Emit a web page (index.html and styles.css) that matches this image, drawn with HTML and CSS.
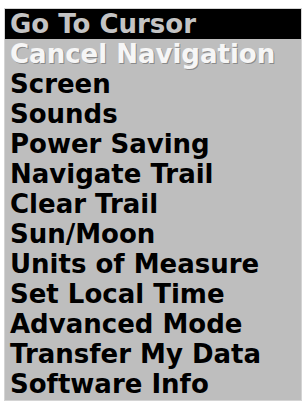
FILE: index.html
```html
<!DOCTYPE html>
<html lang="en">
<head>
    <meta charset="UTF-8">
    <meta name="viewport" content="width=device-width, initial-scale=1.0">
    <title>Settings Menu</title>
    <link rel="stylesheet" href="styles.css">
</head>
<body>
    <div class="menu">
        <div class="menu-item selected">Go To Cursor</div>
        <div class="menu-item disabled">Cancel Navigation</div>
        <div class="menu-item">Screen</div>
        <div class="menu-item">Sounds</div>
        <div class="menu-item">Power Saving</div>
        <div class="menu-item">Navigate Trail</div>
        <div class="menu-item">Clear Trail</div>
        <div class="menu-item">Sun/Moon</div>
        <div class="menu-item">Units of Measure</div>
        <div class="menu-item">Set Local Time</div>
        <div class="menu-item">Advanced Mode</div>
        <div class="menu-item">Transfer My Data</div>
        <div class="menu-item">Software Info</div>
    </div>
</body>
</html>
```

FILE: styles.css
```css
* {
    box-sizing: border-box;
}

body {
    background-color: white;
    margin: 0;
    padding: 8px 4px 0 4px;
    font-family: 'DejaVu Sans', 'Liberation Sans', sans-serif;
}

.menu {
    width: 298px;
    background-color: #bebebe;
    border: 1px solid #d4d4d4;
    padding-bottom: 1px;
}

.menu-item {
    height: 30px;
    line-height: 30px;
    padding-left: 5px;
    font-size: 26px;
    font-weight: bold;
    color: #000;
    white-space: nowrap;
}

.menu-item.selected {
    background-color: #000;
    color: #c4c4c4;
}

.menu-item.disabled {
    color: #f6f6f6;
    text-shadow: 1px 1px 0 #8a8a8a;
}
```
